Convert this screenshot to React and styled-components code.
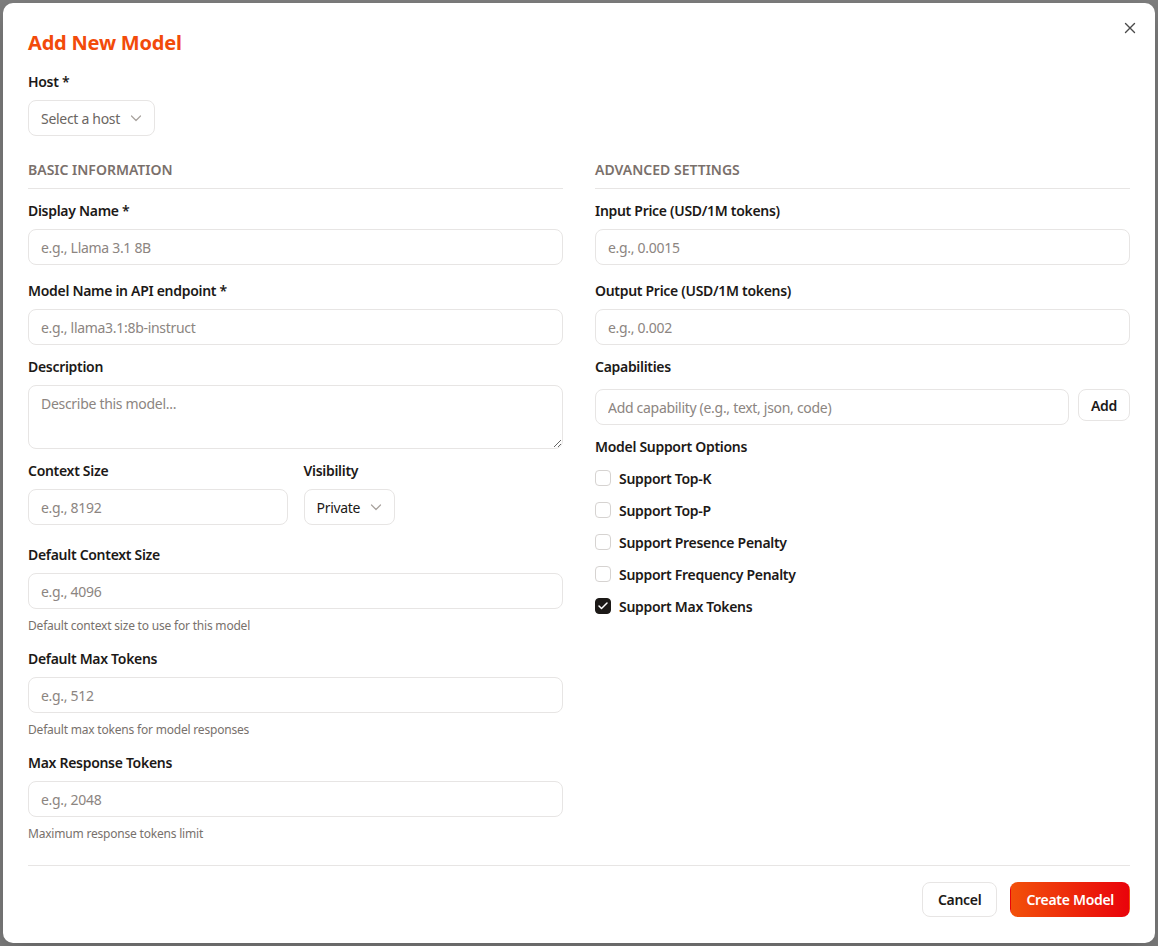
import React, { useState } from 'react';
import styled, { createGlobalStyle } from 'styled-components';

const GlobalStyle = createGlobalStyle`
  html, body {
    margin: 0;
    padding: 0;
    height: 100%;
  }
  body {
    background: #7f7f7f;
    font-family: "Noto Sans", "Open Sans", sans-serif;
    letter-spacing: -0.3px;
    color: #1c1917;
  }
  * {
    box-sizing: border-box;
  }
  input, textarea, button {
    letter-spacing: inherit;
  }
`;

const Backdrop = styled.div`
  width: 1158px;
  height: 946px;
  padding: 3px;
  background: #808080;
`;

const Dialog = styled.div`
  position: relative;
  height: 940px;
  background: #ffffff;
  border-radius: 10px;
  box-shadow: 0 10px 30px rgba(0, 0, 0, 0.25);
  padding: 27px 25px 26px;
  display: flex;
  flex-direction: column;
`;

const CloseButton = styled.button`
  position: absolute;
  top: 15px;
  right: 15px;
  width: 20px;
  height: 20px;
  padding: 0;
  border: none;
  background: none;
  color: #4a4a4a;
  display: flex;
  align-items: center;
  justify-content: center;
`;

const Title = styled.h2`
  margin: 0 0 16px;
  font-size: 20px;
  line-height: 26px;
  font-weight: 700;
  letter-spacing: -0.2px;
  color: #f24b0a;
`;

const Label = styled.label`
  display: block;
  font-size: 14px;
  line-height: 20px;
  font-weight: 600;
  color: #1c1917;
  margin-bottom: ${p => p.$gap || 8}px;
`;

const SelectButton = styled.button`
  display: inline-flex;
  align-items: center;
  gap: 10px;
  height: 36px;
  padding: 0 12px;
  border: 1px solid #e7e5e4;
  border-radius: 8px;
  background: #fff;
  font-family: inherit;
  font-size: 14px;
  color: ${p => (p.$muted ? '#6b6662' : '#1c1917')};
  & svg {
    color: #a8a29e;
  }
`;

const Columns = styled.div`
  display: grid;
  grid-template-columns: 1fr 1fr;
  gap: 32px;
  margin-top: 24px;
  flex: 1;
`;

const Column = styled.div`
  display: flex;
  flex-direction: column;
`;

const SectionTitle = styled.h3`
  margin: 0 0 12px;
  padding-bottom: 8px;
  border-bottom: 1px solid #e7e5e4;
  font-size: 14px;
  line-height: 20px;
  font-weight: 600;
  letter-spacing: 0;
  text-transform: uppercase;
  color: #7a706b;
`;

const Field = styled.div`
  margin-bottom: ${p => (p.$gap === undefined ? 16 : p.$gap)}px;
`;

const Input = styled.input`
  display: block;
  width: 100%;
  height: 36px;
  padding: 0 12px;
  border: 1px solid #e7e5e4;
  border-radius: 8px;
  background: #fff;
  font-family: inherit;
  font-size: 14px;
  color: #1c1917;
  outline: none;
  &::placeholder {
    color: #8c8581;
  }
`;

const TextArea = styled.textarea`
  display: block;
  width: 100%;
  height: 64px;
  padding: 8px 12px;
  border: 1px solid #e7e5e4;
  border-radius: 8px;
  font-family: inherit;
  font-size: 14px;
  line-height: 20px;
  outline: none;
  resize: vertical;
  &::placeholder {
    color: #8c8581;
  }
`;

const Helper = styled.p`
  margin: 9px 0 0;
  font-size: 12px;
  line-height: 16px;
  letter-spacing: -0.2px;
  color: #78716c;
`;

const Pair = styled.div`
  display: grid;
  grid-template-columns: 1fr 1fr;
  gap: 16px;
  margin-bottom: 20px;
`;

const InlineRow = styled.div`
  display: flex;
  align-items: flex-start;
  gap: 9px;
  margin-bottom: 12px;
`;

const SmallButton = styled.button`
  flex-shrink: 0;
  height: 32px;
  padding: 0 12px;
  border: 1px solid #e7e5e4;
  border-radius: 8px;
  background: #fff;
  font-family: inherit;
  font-size: 14px;
  font-weight: 600;
  color: #1c1917;
`;

const CheckList = styled.div`
  display: flex;
  flex-direction: column;
  gap: 12px;
  margin-top: 3px;
`;

const CheckRow = styled.label`
  display: flex;
  align-items: center;
  gap: 8px;
  height: 20px;
  font-size: 14px;
  font-weight: 600;
  color: #1c1917;
  cursor: pointer;
`;

const Box = styled.span`
  width: 16px;
  height: 16px;
  border-radius: 4px;
  border: 1px solid ${p => (p.$on ? '#1c1917' : '#d6d3d1')};
  background: ${p => (p.$on ? '#1c1917' : '#fff')};
  display: flex;
  align-items: center;
  justify-content: center;
  color: #fff;
`;

const Footer = styled.div`
  border-top: 1px solid #e7e5e4;
  padding-top: 16px;
  display: flex;
  justify-content: flex-end;
  gap: 13px;
`;

const Button = styled.button`
  height: 35px;
  padding: 0 15px;
  border-radius: 8px;
  font-family: inherit;
  font-size: 14px;
  font-weight: 600;
  border: 1px solid ${p => (p.$primary ? 'transparent' : '#e7e5e4')};
  background: ${p =>
    p.$primary ? 'linear-gradient(90deg, #f2510a 0%, #e9030b 100%)' : '#fff'};
  color: ${p => (p.$primary ? '#fff' : '#1c1917')};
`;

const Chevron = () => (
  <svg width="12" height="12" viewBox="0 0 12 12" fill="none" stroke="currentColor" strokeWidth="1.2" strokeLinecap="round" strokeLinejoin="round">
    <path d="M1.5 4 6 8.5 10.5 4" />
  </svg>
);

const Check = () => (
  <svg width="12" height="12" viewBox="0 0 24 24" fill="none" stroke="currentColor" strokeWidth="3" strokeLinecap="round" strokeLinejoin="round">
    <path d="M20 6 9 17l-5-5" />
  </svg>
);

const TextField = ({ label, placeholder, helper, gap }) => (
  <Field $gap={gap}>
    <Label>{label}</Label>
    <Input placeholder={placeholder} />
    {helper && <Helper>{helper}</Helper>}
  </Field>
);

const options = [
  ['Support Top-K', false],
  ['Support Top-P', false],
  ['Support Presence Penalty', false],
  ['Support Frequency Penalty', false],
  ['Support Max Tokens', true],
];

export default function App() {
  const [checks, setChecks] = useState(options.map(o => o[1]));
  const toggle = i => setChecks(c => c.map((v, j) => (j === i ? !v : v)));

  return (
    <>
      <GlobalStyle />
      <Backdrop>
        <Dialog>
          <CloseButton aria-label="Close">
            <svg width="12" height="12" viewBox="0 0 12 12" fill="none" stroke="currentColor" strokeWidth="1.4" strokeLinecap="round">
              <path d="M1.5 1.5l9 9M10.5 1.5l-9 9" />
            </svg>
          </CloseButton>
          <Title>Add New Model</Title>

          <div>
            <Label>Host *</Label>
            <SelectButton $muted>
              Select a host <Chevron />
            </SelectButton>
          </div>

          <Columns>
            <Column>
              <SectionTitle>Basic Information</SectionTitle>
              <TextField label="Display Name *" placeholder="e.g., Llama 3.1 8B" />
              <TextField label="Model Name in API endpoint *" placeholder="e.g., llama3.1:8b-instruct" gap={12} />
              <Field $gap={12}>
                <Label>Description</Label>
                <TextArea placeholder="Describe this model..." />
              </Field>
              <Pair>
                <div>
                  <Label>Context Size</Label>
                  <Input placeholder="e.g., 8192" />
                </div>
                <div>
                  <Label>Visibility</Label>
                  <SelectButton>
                    Private <Chevron />
                  </SelectButton>
                </div>
              </Pair>
              <TextField
                label="Default Context Size"
                placeholder="e.g., 4096"
                helper="Default context size to use for this model"
                gap={15}
              />
              <TextField
                label="Default Max Tokens"
                placeholder="e.g., 512"
                helper="Default max tokens for model responses"
                gap={15}
              />
              <TextField
                label="Max Response Tokens"
                placeholder="e.g., 2048"
                helper="Maximum response tokens limit"
                gap={0}
              />
            </Column>

            <Column>
              <SectionTitle>Advanced Settings</SectionTitle>
              <TextField label="Input Price (USD/1M tokens)" placeholder="e.g., 0.0015" />
              <TextField label="Output Price (USD/1M tokens)" placeholder="e.g., 0.002" gap={12} />
              <Label $gap={12}>Capabilities</Label>
              <InlineRow>
                <Input placeholder="Add capability (e.g., text, json, code)" />
                <SmallButton>Add</SmallButton>
              </InlineRow>
              <Label $gap={8}>Model Support Options</Label>
              <CheckList>
                {options.map(([name], i) => (
                  <CheckRow key={name} onClick={() => toggle(i)}>
                    <Box $on={checks[i]}>{checks[i] && <Check />}</Box>
                    {name}
                  </CheckRow>
                ))}
              </CheckList>
            </Column>
          </Columns>

          <Footer>
            <Button>Cancel</Button>
            <Button $primary>Create Model</Button>
          </Footer>
        </Dialog>
      </Backdrop>
    </>
  );
}
